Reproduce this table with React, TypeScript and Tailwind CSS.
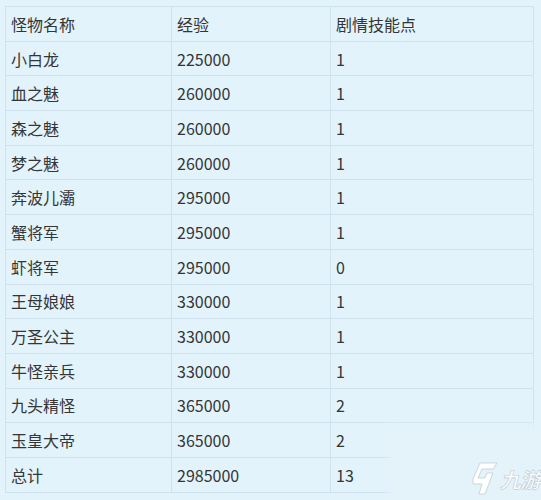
const rows: [string, string, string][] = [
  ["小白龙", "225000", "1"],
  ["血之魅", "260000", "1"],
  ["森之魅", "260000", "1"],
  ["梦之魅", "260000", "1"],
  ["奔波儿灞", "295000", "1"],
  ["蟹将军", "295000", "1"],
  ["虾将军", "295000", "0"],
  ["王母娘娘", "330000", "1"],
  ["万圣公主", "330000", "1"],
  ["牛怪亲兵", "330000", "1"],
  ["九头精怪", "365000", "2"],
  ["玉皇大帝", "365000", "2"],
  ["总计", "2985000", "13"],
];

const cell = "h-[34.7px] border border-[#cfe2ee] px-[5px] py-0 text-left align-middle font-normal";

export default function App() {
  return (
    <div
      className="relative h-[500px] w-[541px] overflow-hidden bg-[#e3f3fc] pl-[5px] pt-[6px] text-[16px] text-[#353535]"
      style={{ fontFamily: '"Noto Sans CJK SC", "Noto Sans", sans-serif' }}
    >
      <table className="w-[528px] table-fixed border-collapse">
        <colgroup>
          <col className="w-[166px]" />
          <col className="w-[159px]" />
          <col className="w-[203px]" />
        </colgroup>
        <thead>
          <tr>
            <th className={cell}>怪物名称</th>
            <th className={cell}>经验</th>
            <th className={cell}>剧情技能点</th>
          </tr>
        </thead>
        <tbody>
          {rows.map(([name, exp, pts]) => (
            <tr key={name}>
              <td className={cell}>{name}</td>
              <td className={cell}>{exp}</td>
              <td className={cell}>{pts}</td>
            </tr>
          ))}
        </tbody>
      </table>

      {/* watermark patch over bottom right corner */}
      <div className="absolute left-[388px] top-[424px] h-[100px] w-[180px] bg-[#e4f2fa] blur-[3px]" />
      <div className="absolute bottom-[5px] right-[1px] flex items-end gap-[2px]">
        <svg width="26" height="33" viewBox="0 0 26 33" fill="white" stroke="#bfcdd6" strokeWidth="0.8" strokeLinejoin="round">
          <path d="M8 1 L25 1 L21 7 L10 7 L6 16 L13 16 L15 11 L21 11 L13 32 L7 32 L10 22 L1 22 L1 17 Z" />
        </svg>
        <span className="mb-[5px] text-[21px] font-bold italic leading-none tracking-[-1px] text-white [-webkit-text-stroke:0.6px_#bccbd4]">
          九游
        </span>
      </div>
    </div>
  );
}
